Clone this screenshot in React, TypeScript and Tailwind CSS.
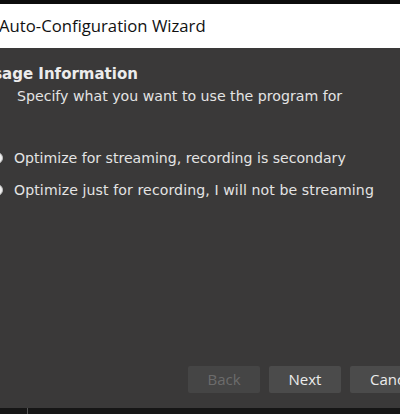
import React from "react";

export default function App() {
  return (
    <div className="w-[400px] h-[414px] overflow-hidden flex flex-col bg-[#3a3939]">
      <div className="h-[4px] bg-[#0c0c0c] shrink-0" />
      <div className="h-[44px] bg-white shrink-0 flex items-center">
        <span className="ml-[-1px] text-[16.7px] text-[#111] font-['Open_Sans',sans-serif] leading-none">
          Auto-Configuration Wizard
        </span>
      </div>
      <div className="flex-1 flex flex-col bg-[#3a3939] text-[#e4e4e4]">
        <div className="mt-[19px] ml-[-19px] text-[15px] font-bold font-['DejaVu_Sans',sans-serif] leading-none text-[#ececec] whitespace-nowrap">
          Usage Information
        </div>
        <div className="mt-[7px] ml-[17px] text-[14.15px] font-['DejaVu_Sans',sans-serif] leading-none whitespace-nowrap">
          Specify what you want to use the program for
        </div>
        <div className="mt-[48px] flex flex-col gap-[18px]">
          <div className="flex items-center">
            <span className="ml-[-9px] w-[12px] h-[12px] rounded-full bg-[#f0f0f0] border border-[#bbb] shrink-0" />
            <span className="ml-[11px] text-[14.1px] font-['DejaVu_Sans',sans-serif] leading-none whitespace-nowrap">
              Optimize for streaming, recording is secondary
            </span>
          </div>
          <div className="flex items-center">
            <span className="ml-[-9px] w-[12px] h-[12px] rounded-full bg-[#f0f0f0] border border-[#bbb] shrink-0" />
            <span className="ml-[11px] text-[14.1px] tracking-[0.1px] font-['DejaVu_Sans',sans-serif] leading-none whitespace-nowrap">
              Optimize just for recording, I will not be streaming
            </span>
          </div>
        </div>
        <div className="flex-1" />
        <div className="flex gap-[9px] ml-[188px] mb-[15px]">
          <div className="w-[72px] h-[27px] shrink-0 rounded-[2px] bg-[#454545] flex items-center justify-center text-[15px] text-[#6c6c6c] font-['Open_Sans',sans-serif]">
            Back
          </div>
          <div className="w-[72px] h-[27px] shrink-0 rounded-[2px] bg-[#4b4b4b] flex items-center justify-center text-[15px] text-[#ececec] font-['Open_Sans',sans-serif]">
            Next
          </div>
          <div className="w-[72px] h-[27px] shrink-0 rounded-[2px] bg-[#4b4b4b] flex items-center justify-start pl-[20px] text-[15px] text-[#ececec] font-['Open_Sans',sans-serif]">
            Cancel
          </div>
        </div>
      </div>
      <div className="h-[6px] bg-[#161616] shrink-0 flex">
        <div className="ml-[27px] w-[1px] bg-[#555]" />
      </div>
    </div>
  );
}
